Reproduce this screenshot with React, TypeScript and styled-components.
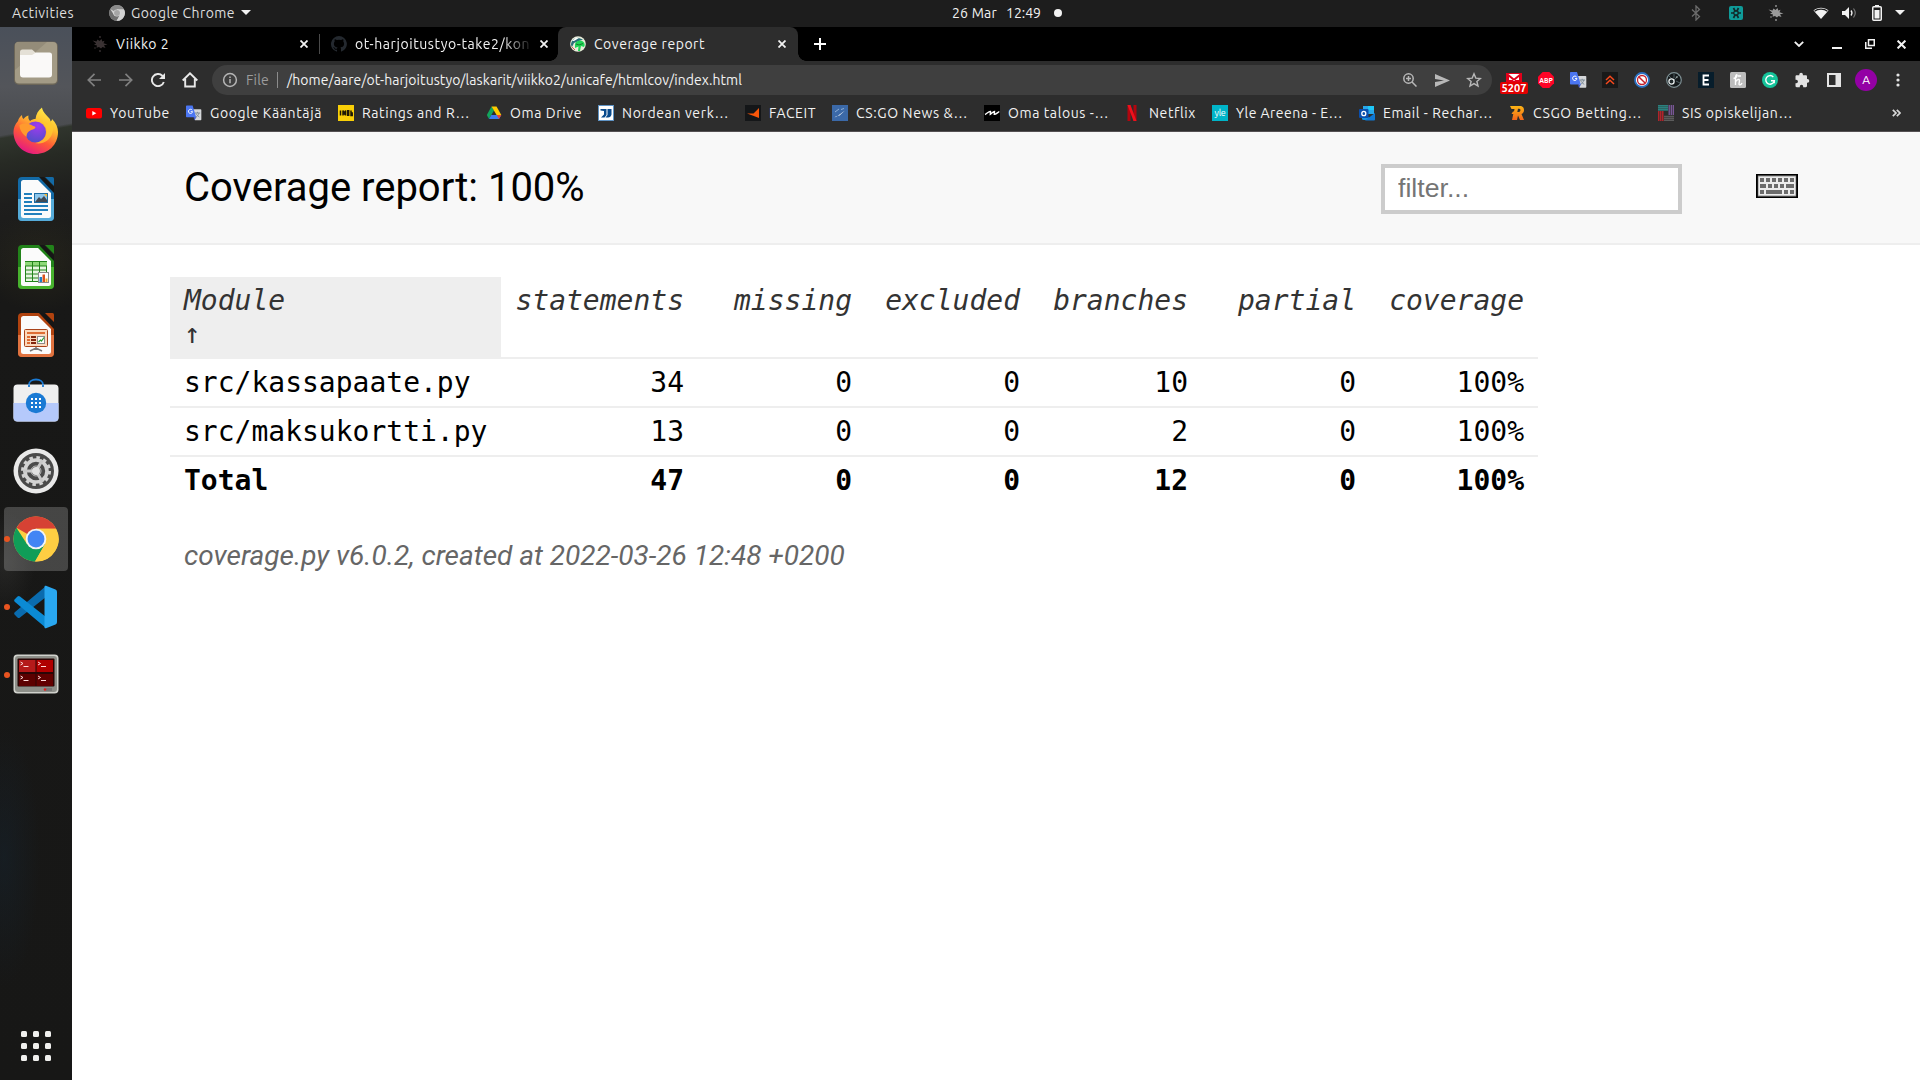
import React, { useLayoutEffect, useRef, useState } from "react";
import styled, { createGlobalStyle, css } from "styled-components";

const GlobalStyle = createGlobalStyle`
  html, body { margin: 0; padding: 0; }
  body { background: #fff; overflow: hidden; }
  * { box-sizing: border-box; }
`;

const uiFont = css`
  font-family: Ubuntu, "Noto Sans", "Open Sans", sans-serif;
  font-size: 14px;
  line-height: 20px;
`;

/* ---------- text fitted to a given advance width ---------- */

const Label = styled.span<{ $w: number; $color?: string; $size?: number; $weight?: number }>`
  display: block;
  flex: none;
  width: ${(p) => p.$w}px;
  white-space: pre;
  color: ${(p) => p.$color || "#f2f2f2"};
  font-size: ${(p) => p.$size || 14}px;
  font-weight: ${(p) => p.$weight || 400};
`;

type FitProps = { text: string; w: number; color?: string; size?: number; weight?: number };

function Fit({ text, w, color, size, weight }: FitProps) {
  const ref = useRef<HTMLSpanElement>(null);
  const [spacing, setSpacing] = useState(0);
  useLayoutEffect(() => {
    if (ref.current) {
      const natural = ref.current.getBoundingClientRect().width;
      setSpacing((w - natural) / text.length);
    }
  }, [text, w]);
  return (
    <Label $w={w} $color={color} $size={size} $weight={weight}>
      <span ref={ref} style={{ letterSpacing: `${spacing}px` }}>
        {text}
      </span>
    </Label>
  );
}

/* ---------- desktop shell ---------- */

const Screen = styled.div`
  ${uiFont}
  width: 1920px;
  height: 1080px;
  display: flex;
  flex-direction: column;
  overflow: hidden;
`;

const TopBar = styled.header`
  height: 27px;
  flex: none;
  display: grid;
  grid-template-columns: 952px 1fr auto;
  align-items: center;
  padding-bottom: 2px;
  background: #1d1d1d;
`;

const TopLeft = styled.div`
  display: flex;
  align-items: center;
  padding-left: 12px;
`;

const AppMenu = styled.div`
  display: flex;
  align-items: center;
  gap: 6px;
  margin-left: 35px;
`;

const Clock = styled.div`
  display: flex;
  align-items: center;
  gap: 9px;
`;

const NotifyDot = styled.i`
  width: 8px;
  height: 8px;
  margin-left: 4px;
  border-radius: 50%;
  background: #f2f2f2;
`;

const Tray = styled.div`
  display: flex;
  align-items: center;
  padding-right: 15px;
`;

const TrayCell = styled.span<{ $w: number }>`
  width: ${(p) => p.$w}px;
  display: flex;
  justify-content: center;
`;

const Caret = styled.i`
  border: 5px solid transparent;
  border-top-color: #f2f2f2;
  border-bottom: 0;
`;

const Body = styled.div`
  flex: 1;
  display: flex;
  min-height: 0;
`;

const Dock = styled.nav`
  width: 72px;
  flex: none;
  display: flex;
  flex-direction: column;
  align-items: center;
  gap: 4px;
  padding: 4px 0 2px;
  background:
    radial-gradient(ellipse 36px 130px at 4px 830px, rgba(22, 34, 44, 0.55), transparent),
    radial-gradient(ellipse 60px 50px at 40px 235px, rgba(50, 48, 28, 0.45), transparent),
    radial-gradient(ellipse 30px 50px at 5px 535px, rgba(60, 60, 58, 0.4), transparent),
    linear-gradient(170deg, transparent 107px, #30352d 110px, #272a24 135px, #1e1e1d 175px, #181817 260px, #171716 100%),
    linear-gradient(#4a505a, #53555a 60px, #484a4d 110px);
`;

const DockItem = styled.div<{ $active?: boolean }>`
  position: relative;
  width: 64px;
  height: 64px;
  flex: none;
  display: flex;
  align-items: center;
  justify-content: center;
  border-radius: 4px;
  background: ${(p) => (p.$active ? "rgba(255,255,255,0.2)" : "transparent")};
`;

const RunningDot = styled.i`
  position: absolute;
  left: 0;
  top: 29px;
  width: 6px;
  height: 6px;
  border-radius: 50%;
  background: #e95420;
`;

const AppsButton = styled.div`
  width: 30px;
  display: grid;
  grid-template-columns: repeat(3, 6px);
  gap: 6px;
  margin: auto 0 17px;
`;

const AppsDot = styled.i`
  height: 6px;
  border-radius: 1.5px;
  background: #f0f0ee;
`;

/* ---------- browser ---------- */

const Browser = styled.main`
  flex: 1;
  display: flex;
  flex-direction: column;
  min-width: 0;
  background: #fff;
`;

const TabStrip = styled.div`
  height: 34px;
  flex: none;
  display: flex;
  background: #000;
`;

const Tab = styled.div<{ $w: number; $inset: number; $active?: boolean }>`
  position: relative;
  width: ${(p) => p.$w}px;
  display: flex;
  align-items: center;
  gap: 8px;
  border-radius: 8px 8px 0 0;
  background: ${(p) => (p.$active ? "#2d2d2d" : "transparent")};
  padding: 0 8px 0 ${(p) => p.$inset}px;
  ${(p) =>
    p.$active &&
    css`
      &::before,
      &::after {
        content: "";
        position: absolute;
        bottom: 0;
        width: 8px;
        height: 8px;
      }
      &::before {
        left: -8px;
        background: radial-gradient(circle at 0 0, #000 7.5px, #2d2d2d 8px);
      }
      &::after {
        right: -8px;
        background: radial-gradient(circle at 100% 0, #000 7.5px, #2d2d2d 8px);
      }
    `}
`;

const TabTitle = styled.div<{ $fade?: boolean }>`
  flex: 1;
  min-width: 0;
  ${(p) =>
    p.$fade &&
    css`
      mask-image: linear-gradient(to right, #000 148px, transparent 178px);
    `}
`;

const TabDivider = styled.i`
  width: 1px;
  height: 20px;
  margin: 7px 0 0;
  background: #4a4a4a;
`;

const NewTab = styled.div`
  width: 44px;
  display: grid;
  place-items: center;
`;

const WindowControls = styled.div`
  margin-left: auto;
  display: flex;
  align-items: center;
`;

const Toolbar = styled.div`
  height: 38px;
  flex: none;
  display: flex;
  align-items: center;
  padding-left: 6px;
  background: #2d2d2d;
`;

const Cell = styled.div<{ $w?: number }>`
  position: relative;
  width: ${(p) => p.$w || 32}px;
  flex: none;
  display: flex;
  align-items: center;
  justify-content: center;
`;

const Omnibox = styled.div`
  width: 1280px;
  height: 30px;
  margin: 0 6px;
  padding: 0 2px 0 10px;
  flex: none;
  display: flex;
  align-items: center;
  border-radius: 15px;
  background: #3f3f3f;
`;

const OmniText = styled.div`
  flex: 1;
  display: flex;
  align-items: center;
  gap: 8px;
  margin-left: 8px;
`;

const OmniDivider = styled.i`
  width: 1px;
  height: 16px;
  background: #8c8c8c;
  margin-right: 1px;
`;

const MailBadge = styled.b`
  position: absolute;
  left: 2px;
  top: 10px;
  width: 28px;
  height: 12px;
  border-radius: 2px;
  background: #e30000;
  color: #fff;
  font-size: 11px;
  line-height: 12px;
  text-align: center;
`;

const Tile = styled.span<{ $bg: string; $fg?: string; $round?: string; $font?: number; $box?: number }>`
  width: ${(p) => p.$box || 16}px;
  height: ${(p) => p.$box || 16}px;
  flex: none;
  display: grid;
  place-items: center;
  border-radius: ${(p) => p.$round || "0"};
  background: ${(p) => p.$bg};
  color: ${(p) => p.$fg || "#fff"};
  font-size: ${(p) => p.$font || 10}px;
  line-height: 1;
  letter-spacing: -0.3px;
`;

const Bookmarks = styled.div`
  height: 32px;
  flex: none;
  display: flex;
  align-items: center;
  gap: 16px;
  padding: 0 19px 4px 14px;
  background: #2d2d2d;
`;

const Bookmark = styled.div`
  display: flex;
  align-items: center;
  gap: 8px;
`;

const Overflow = styled.div`
  margin-left: auto;
  display: flex;
`;

const BrowserEdge = styled.div`
  height: 1px;
  flex: none;
  background: #555153;
`;

/* ---------- coverage page ---------- */

const ReportHeader = styled.div`
  height: 113px;
  flex: none;
  display: flex;
  align-items: flex-start;
  padding: 32px 122px 0 112px;
  background: #f8f8f8;
  border-bottom: 2px solid #eee;
`;

const Title = styled.h1`
  flex: 1;
  margin: 0;
  font: 400 40px/47px Roboto, sans-serif;
  color: #000;
`;

const Filter = styled.input`
  width: 301px;
  height: 50px;
  padding: 0 13px 1px;
  border: 4px solid #ccc;
  border-radius: 0;
  background: #fff;
  font: 26.67px "Liberation Sans", Arial, sans-serif;
  &::placeholder {
    color: #757575;
    opacity: 1;
  }
`;

const KeyboardButton = styled.div`
  display: flex;
  margin: 10px 0 0 74px;
`;

const ReportBody = styled.section`
  padding: 32px 0 0 98px;
`;

const Table = styled.table`
  width: 1368px;
  table-layout: fixed;
  border-collapse: separate;
  border-spacing: 0;
  font: 28px/33px "DejaVu Sans Mono", monospace;
  color: #000;
`;

const Col = styled.col<{ $w: number }>`
  width: ${(p) => p.$w}px;
`;

const Th = styled.th<{ $sorted?: boolean }>`
  padding: 7px 14px;
  vertical-align: top;
  white-space: nowrap;
  font-weight: 400;
  font-style: italic;
  color: #333;
  text-align: ${(p) => (p.$sorted ? "left" : "right")};
  background: ${(p) => (p.$sorted ? "#eee" : "transparent")};
  border-bottom: 2px solid #eee;
`;

const SortArrow = styled.span`
  display: block;
  font-style: normal;
`;

const Td = styled.td<{ $total?: boolean }>`
  padding: 7px 14px;
  white-space: nowrap;
  text-align: right;
  font-weight: ${(p) => (p.$total ? 700 : 400)};
  border-bottom: ${(p) => (p.$total ? "0" : "2px solid #eee")};
  &:first-child {
    text-align: left;
  }
`;

const Footer = styled.p`
  margin: 35px 0 0 14px;
  font: italic 400 28px/33px Roboto, sans-serif;
  color: #666;
`;

/* ---------- drawings ---------- */

const Close = ({ s = 8, w = 1.8 }: { s?: number; w?: number }) => (
  <svg width={s} height={s} viewBox="0 0 8 8" stroke="#f2f2f2" strokeWidth={w} fill="none">
    <path d="M.5.5l7 7M7.5.5l-7 7" />
  </svg>
);

const Bird = ({ color }: { color: string }) => (
  <svg width="16" height="16" viewBox="0 0 16 16" fill={color}>
    <path d="M.5 4.500l4 1L5.500 3.500l2 1.500L9.500 3l.8 2.500 2.200-.8-1 2.500L15.500 8.500l-3.500.8 1.500 2.700-3-1L9 12.500l-2-1.500-2.500.8.5-2.300-3-.7 2.200-1.300z" />
    <circle cx="8" cy="1" r=".9" />
    <circle cx="8" cy="15" r=".9" />
    <circle cx="3" cy="12" r=".8" />
  </svg>
);

const ChromeLogo = ({ size, mono }: { size: number; mono?: boolean }) => {
  const c = mono ? ["#8a8a8a", "#d2d2d2", "#6e6e6e", "#a5a5a5"] : ["#d64234", "#fece43", "#109d58", "#4285f4"];
  return (
    <svg width={size} height={size} viewBox="0 0 48 48">
      <circle cx="24" cy="24" r="23.500" fill={c[1]} />
      <path d="M24 24L3.600 12.300A23.500 23.500 0 0 1 45 13.200H24z" fill={c[0]} />
      <path d="M3.600 12.300A23.500 23.500 0 0 0 23 47.500L33.300 29.500 24 24l-9.300 5.500z" fill={c[2]} />
      <path d="M24 13.200h21A23.500 23.500 0 0 1 23 47.500l10.400-18z" fill={c[1]} />
      <circle cx="24" cy="24" r="10.800" fill={mono ? "#d8d8d8" : "#f4f4f4"} />
      <circle cx="24" cy="24" r="8.800" fill={c[3]} />
    </svg>
  );
};

const Translate = () => (
  <svg width="17" height="16" viewBox="0 0 17 16">
    <path d="M7 4h8.500a.8.8 0 0 1 .8.8V15a.8.8 0 0 1-.8.8H9.500z" fill="#d5d7da" />
    <path d="M9.500 8h5.500M12.200 6.800V8M13.800 8c-.5 2-1.700 3.500-3.300 4.500M10.700 8.500c.6 1.500 2 3 3.500 3.800" stroke="#7c8a96" fill="none" />
    <path d="M.8 0H7l3.800 12.500H.8A.8.8 0 0 1 0 11.700V.8A.8.8 0 0 1 .8 0z" fill="#4b76f2" />
    <path d="M8 12.500h3L9 15.800z" fill="#3a55c8" />
    <path d="M6.600 5A2.200 2.200 0 1 0 7 6.600H5" stroke="#fff" strokeWidth="1" fill="none" />
  </svg>
);

const CoverageFavicon = () => (
  <svg width="16" height="16" viewBox="0 0 16 16">
    <circle cx="8" cy="8" r="7.800" fill="#e8ecd9" />
    <path d="M1 9C1 5 4 2 8 1.800l5 1.700L9 5 4 7 2 11z" fill="#2c6f78" />
    <path d="M2 5l4-3.500 3 .5-5 3z" fill="#fff" />
    <path d="M5 8c1-3 5-4.500 8-2.500 2 1.500 2 4 1 5.500l-3-1-1 5H8l.5-4.500L5 12z" fill="#1fd655" />
    <path d="M6 8l3 1 4-1.500" stroke="#167a2e" fill="none" />
    <path d="M1.500 10.500L5 14" stroke="#c33" strokeWidth=".8" />
  </svg>
);

const GitHub = () => (
  <svg width="16" height="16" viewBox="0 0 16 16" fill="#24292f">
    <path d="M8 0a8 8 0 0 0-2.530 15.590c.4.070.55-.17.55-.38v-1.490C3.780 14.200 3.310 12.740 3.310 12.740c-.36-.92-.89-1.170-.89-1.170-.73-.5.050-.49.050-.49.8.060 1.230.83 1.230.83.71 1.220 1.870.87 2.330.66.070-.52.280-.87.500-1.070-1.780-.2-3.640-.89-3.640-3.950 0-.87.310-1.590.82-2.150-.08-.2-.36-1.020.08-2.120 0 0 .67-.21 2.200.82a7.600 7.600 0 0 1 4 0c1.530-1.040 2.200-.82 2.200-.82.44 1.100.16 1.920.08 2.120.51.56.82 1.270.82 2.150 0 3.070-1.870 3.750-3.650 3.950.29.250.54.730.54 1.480v2.190c0 .21.150.46.550.38A8 8 0 0 0 8 0z" />
  </svg>
);

const FilesIcon = () => (
  <svg width="46" height="46" viewBox="0 0 46 46">
    <rect x="1" y="1.500" width="44" height="43.500" rx="5" fill="#6c6658" />
    <rect x="2" y="2" width="42" height="41.500" rx="4" fill="#a39b86" />
    <path d="M2 30L34 2H6a4 4 0 0 0-4 4z" fill="#948c79" />
    <path d="M7 12a2.500 2.500 0 0 1 2.500-2.500H19l4 3.500v6H7z" fill="#e4e0d6" />
    <path d="M7 15h12l4-2.500h13.500A2.500 2.500 0 0 1 39 15v19.500a3 3 0 0 1-3 3H10a3 3 0 0 1-3-3z" fill="#faf9f8" />
  </svg>
);

const FirefoxIcon = () => (
  <svg width="46" height="48" viewBox="0 0 46 48">
    <defs>
      <linearGradient id="ffBody" x1=".8" y1="0" x2=".3" y2="1">
        <stop offset="0" stopColor="#fff44f" />
        <stop offset=".35" stopColor="#ffbd2e" />
        <stop offset=".65" stopColor="#ff5a36" />
        <stop offset="1" stopColor="#e31587" />
      </linearGradient>
      <radialGradient id="ffGlobe" cx=".6" cy=".2" r=".9">
        <stop offset="0" stopColor="#a03bf0" />
        <stop offset="1" stopColor="#4a4fc4" />
      </radialGradient>
    </defs>
    <path d="M5 14c.5-2.500 2-4.500 4-6 0 2 .5 3 1.500 4 1.500-2 3-3 5-3.500-.5 2 0 4 1.500 5.500 2-1.500 3.500-2 5.500-2 .5-5 3-9 6.500-11.500.5 4 4 7 7 10.500 1 1 1.500 2.500 1.500 3.500 1-.5 1.500-1.500 1.500-2.500 4 4 6 8.500 6 13 0 13-10 22-22.500 22S.5 37 .5 25c0-4 1.500-8 4.500-11z" fill="url(#ffBody)" />
    <circle cx="22.500" cy="25" r="10.500" fill="url(#ffGlobe)" />
    <path d="M6.500 18c5-2.500 9-1.500 12 0 1.500 1 4 1.500 4 2.500-1 2-4 2-6 3.500-2 1-3 3-3 6-4-3-7-7-7-12z" fill="#ff9a2e" />
    <path d="M24 12.500c6 1 9.500 6 9.500 11.500 0 6-4.500 11-11.500 12 9 2 17-4 18-13 .5-5-2-8-5-10.500 0 2 0 4-.5 6-2.500-4-6-6.500-10.500-6z" fill="#ffcb2f" opacity=".75" />
  </svg>
);

type OfficeKind = "writer" | "calc" | "impress";

const OfficeIcon = ({ kind }: { kind: OfficeKind }) => {
  const dark = { writer: "#136aa6", calc: "#22831a", impress: "#b1430f" }[kind];
  const light = { writer: "#55abd9", calc: "#48b32e", impress: "#e07340" }[kind];
  return (
    <svg width="38" height="46" viewBox="0 0 38 46">
      <path d="M5 1h19l13 13v27a4 4 0 0 1-4 4H5a4 4 0 0 1-4-4V5a4 4 0 0 1 4-4z" fill={dark} />
      <path d="M1 23h36v18a4 4 0 0 1-4 4H5a4 4 0 0 1-4-4z" fill={light} />
      <path d="M6.500 4H21l13 13v22.500a2.500 2.500 0 0 1-2.500 2.500h-25A2.500 2.500 0 0 1 4 39.500v-33A2.500 2.500 0 0 1 6.500 4z" fill="#fbfbfb" />
      <path d="M22 1l5 0 10 10v6z" fill="#161616" />
      <path d="M28 1h7.500A1.500 1.500 0 0 1 37 2.500V10z" fill={dark} />
      {kind === "writer" && (
        <g>
          <path d="M7 18h8M7 22h8M7 26h8M7 30h24M7 34h24M7 38h18" stroke="#2180bd" strokeWidth="2" />
          <rect x="17.500" y="17.500" width="13" height="9" fill="#8cc6ec" stroke="#1c6ca3" />
          <path d="M18 26l4-5 2 2 3-3 3 4v2z" fill="#414b55" />
          <path d="M27 18h3v3z" fill="#f5b52e" />
        </g>
      )}
      {kind === "calc" && (
        <g>
          <rect x="8.500" y="17.500" width="21" height="20" fill="#e6f6df" stroke="#22831a" />
          <path d="M8 18h22v4H8z" fill="#8ed878" />
          <path d="M8 22h22M8 26h22M8 30h22M8 34h22M15.500 17v21M22.500 17v21" stroke="#22831a" />
          <rect x="21.500" y="28.500" width="10" height="10" fill="#fff" stroke="#8a8a8a" />
          <path d="M22.500 33h2.500v5h-2.500z" fill="#1c80c8" />
          <path d="M25.500 30.500h2.500v7.500h-2.500z" fill="#d9521c" />
          <path d="M28.500 34.500h2v3.500h-2z" fill="#f0ab26" />
        </g>
      )}
      {kind === "impress" && (
        <g>
          <path d="M19 35v3M13 39l6-3 6 3" stroke="#777" strokeWidth="1.500" fill="none" />
          <rect x="7.500" y="17.500" width="23" height="17" rx="1" fill="#fbd9bd" stroke="#a9431a" />
          <path d="M10 21h18" stroke="#df6d34" strokeWidth="2" />
          <path d="M10 25h3M10 28h3M10 31h3" stroke="#df6d34" strokeWidth="2" />
          <path d="M14 25h5M14 28h5M14 31h5" stroke="#83260c" strokeWidth="2" />
          <rect x="20.500" y="24.500" width="7" height="7" fill="#fff" stroke="#8a8a8a" />
          <path d="M21.500 30l2-2 1 1 2.500-3.500" stroke="#2c9b2c" strokeWidth="1.200" fill="none" />
        </g>
      )}
    </svg>
  );
};

const SoftwareIcon = () => (
  <svg width="46" height="50" viewBox="0 0 46 50">
    <path d="M16 9V6.500c0-3 3-5 7-5s7 2 7 5V9" fill="none" stroke="#1a7ad4" strokeWidth="1.800" />
    <rect x=".5" y="6.500" width="45" height="37" rx="4" fill="#efefef" />
    <path d="M.5 25h45v14.500a4 4 0 0 1-4 4h-37a4 4 0 0 1-4-4z" fill="#b5c9fb" />
    <path d="M16 9V6.500M30 9V6.500" stroke="#1a7ad4" strokeWidth="1.800" />
    <circle cx="23" cy="25" r="10.200" fill="#1a7ad4" />
    {[21, 25, 29].map((y) => [19, 23, 27].map((x) => <rect key={`${x}-${y}`} x={x - 1} y={y - 1} width="2" height="2" fill="#fff" />))}
  </svg>
);

const SettingsIcon = () => (
  <svg width="46" height="46" viewBox="0 0 46 46">
    <circle cx="23" cy="23" r="22.500" fill="#e9e9e9" />
    <circle cx="23" cy="23" r="18" fill="#4a4a4a" />
    <circle cx="23" cy="23" r="13.500" fill="none" stroke="#d2d2d2" strokeWidth="3" strokeDasharray="3.500 3.568" />
    <circle cx="23" cy="23" r="11" fill="none" stroke="#d2d2d2" strokeWidth="3.600" />
    <circle cx="23" cy="23" r="5" fill="none" stroke="#bdbdbd" strokeWidth="1" />
    <path d="M23 23H10M23 23l6.500-11M23 23l6.500 11" stroke="#c8c8c8" strokeWidth="3" />
    <circle cx="23" cy="23" r="4" fill="#e0e0e0" />
  </svg>
);

const CodeIcon = () => (
  <svg width="44" height="44" viewBox="0 0 44 44">
    <path d="M32 1v11L6 32.500a2 2 0 0 1-2.500 0L1 30a2 2 0 0 1 0-3z" fill="#0a6bae" />
    <path d="M32 43V32L6 11.500a2 2 0 0 0-2.500 0L1 14a2 2 0 0 0 0 3z" fill="#0b8ad4" />
    <path d="M32 .8l9.500 3.700A2.500 2.500 0 0 1 43 7v30a2.500 2.500 0 0 1-1.500 2.500L32 43.200c-1 .3-1.500-.2-1.500-1.200V2c0-1 .5-1.500 1.500-1.200z" fill="#29a7f0" />
  </svg>
);

const TerminatorIcon = () => (
  <svg width="46" height="44" viewBox="0 0 46 44">
    <rect x=".5" y="1.500" width="45" height="39" rx="4" fill="#d0d1cc" />
    <rect x="2" y="3" width="42" height="36" rx="3" fill="#8d8f89" />
    <rect x="4.500" y="5.500" width="37" height="28" rx="1" fill="#2a0606" />
    {[
      [6, 7, "#b51a1a"],
      [23.500, 7, "#b00000"],
      [6, 21, "#5c0000"],
      [23.500, 21, "#620000"],
    ].map(([x, y, f]) => (
      <g key={`${x}-${y}`} transform={`translate(${x} ${y})`}>
        <rect width="16.500" height="12" fill={f as string} />
        <path d="M1.500 2l2.500 1.500L1.500 5M4.500 6.500h5" stroke="#ffd9d9" fill="none" />
      </g>
    ))}
    <path d="M33 35h6v3h-6z" fill="#777" />
    <circle cx="32" cy="36.500" r="1.300" fill="#e02020" />
  </svg>
);

const Keyboard = () => (
  <svg width="42" height="24" viewBox="0 0 42 24">
    <rect width="42" height="24" fill="#000" />
    <rect x="1.800" y="1.500" width="38.400" height="21" fill="#909090" />
    <rect x="2.500" y="2.500" width="37" height="19" fill="#ececec" />
    <path
      d="M4 6h4M10 6h4M16 6h4M22 6h4M28 6h4M34 6h4M4 12h6M12 12h4M18 12h4M24 12h4M30 12h8M4 18h4M10 18h16M28 18h4M34 18h4"
      stroke="#6c6c6c"
      strokeWidth="4"
    />
  </svg>
);

const ImdbIcon = () => (
  <svg width="16" height="16" viewBox="0 0 16 16">
    <path d="M0 0h16v16H0z" fill="#f9cf07" />
    <path d="M2.500 5.500v5M5 10.500v-5l1.300 3 1.300-3v5M9.700 5.800v4.400h1V5.800zM13 5.500v5h1.200V8H13" stroke="#1b1705" strokeWidth="1.500" fill="none" />
  </svg>
);

/* ---------- data ---------- */

const bookmarks: { icon: React.ReactNode; text: string; w: number }[] = [
  {
    icon: (
      <svg width="16" height="16" viewBox="0 0 16 16">
        <rect y="3" width="16" height="10.500" rx="2.500" fill="#f00" />
        <path d="M6.300 6v4.500l4-2.250z" fill="#fff" />
      </svg>
    ),
    text: "YouTube",
    w: 60,
  },
  { icon: <Cell $w={16}><Translate /></Cell>, text: "Google Kääntäjä", w: 112 },
  { icon: <ImdbIcon />, text: "Ratings and R…", w: 108 },
  {
    icon: (
      <svg width="16" height="16" viewBox="0 0 16 16">
        <path d="M5.500 1.500L.8 10 3 14l5-8.500z" fill="#11a45c" />
        <path d="M5.500 1.500h5L15.300 10h-4.700z" fill="#fecb00" />
        <path d="M3 14l2.300-4h10L13 14z" fill="#3c7bf0" />
        <path d="M10.700 10h4.600L13 14z" fill="#ea4335" />
      </svg>
    ),
    text: "Oma Drive",
    w: 72,
  },
  {
    icon: (
      <svg width="16" height="16" viewBox="0 0 16 16">
        <path d="M0 0h16v16H0z" fill="#5f93c4" />
        <path d="M1 1h14v14H1z" fill="#fff" />
        <path d="M2.500 4H8.500v6L6.500 12.500H3L6 9.500V6L2.500 5.500zM9.500 4h4v5.500c-.5 2-1.500 3-3.500 3H7.500l2-2.500z" fill="#0a4b8c" />
      </svg>
    ),
    text: "Nordean verk…",
    w: 107,
  },
  {
    icon: (
      <svg width="16" height="16" viewBox="0 0 16 16">
        <path d="M0 0h16v16H0z" fill="#141618" />
        <path d="M14 3v10L9.500 11.200 2 8.500h6.500z" fill="#f95609" />
      </svg>
    ),
    text: "FACEIT",
    w: 47,
  },
  {
    icon: (
      <svg width="16" height="16" viewBox="0 0 16 16">
        <path d="M0 0h16v16H0z" fill="#3b69a8" />
        <path d="M2.500 12.500l3-1.500 7.500-5.500-5.500 5-3.500.8z" fill="#fff" />
        <path d="M3 7l4-3M9 4.500l3-1" stroke="#8fb0d6" />
      </svg>
    ),
    text: "CS:GO News &…",
    w: 112,
  },
  {
    icon: (
      <svg width="16" height="16" viewBox="0 0 16 16">
        <path d="M0 0h16v16H0z" />
        <path d="M1 9.500C3 8.500 5 6 6.500 6.500L6.300 9.300C8 8.500 9 6.500 10.500 6.500l-.2 2.800c1.500 0 3-1.500 5-2.800" stroke="#fff" strokeWidth="1.400" fill="none" />
      </svg>
    ),
    text: "Oma talous -…",
    w: 101,
  },
  {
    icon: (
      <svg width="16" height="16" viewBox="0 0 16 16">
        <path d="M2.500 0h3v16h-3zM8.500 0h3v16h-3z" fill="#b1060f" />
        <path d="M2.500 0h3l6 16h-3z" fill="#f0101c" />
      </svg>
    ),
    text: "Netflix",
    w: 47,
  },
  { icon: <Tile $bg="#00b4c8" $font={9}>yle</Tile>, text: "Yle Areena - E…", w: 107 },
  {
    icon: (
      <svg width="16" height="16" viewBox="0 0 16 16">
        <path d="M4 1h11v8H4z" fill="#28a8ea" />
        <path d="M9 1h6v4H9z" fill="#1fc8f8" />
        <path d="M3 9l12 6H4.500A1.500 1.500 0 0 1 3 13.500z" fill="#1490df" />
        <path d="M16 8v6.500a1 1 0 0 1-1 1H6z" fill="#0f78d4" />
        <rect y="4" width="9.500" height="9" rx="1" fill="#0a4fae" />
        <ellipse cx="4.800" cy="8.500" rx="2" ry="2.200" fill="none" stroke="#fff" strokeWidth="1.300" />
      </svg>
    ),
    text: "Email - Rechar…",
    w: 110,
  },
  {
    icon: (
      <svg width="16" height="16" viewBox="0 0 16 16">
        <defs>
          <linearGradient id="rg" x2="0" y2="1">
            <stop stopColor="#fdb515" />
            <stop offset="1" stopColor="#f4641b" />
          </linearGradient>
        </defs>
        <path
          fillRule="evenodd"
          d="M1 1h9.500C14 1 15 3 15 5s-1 3.500-2.500 4L15 15h-4L9 10.500 8 15H3l1.300-6H2.500L4 6.500h1L5.500 4H2.500zM9 3.800L8.300 7h1.500c2 0 2.300-3.200.4-3.200z"
          fill="url(#rg)"
        />
      </svg>
    ),
    text: "CSGO Betting…",
    w: 109,
  },
  {
    icon: (
      <svg width="16" height="16" viewBox="0 0 16 16" strokeWidth="1.300">
        <path d="M0 .8h10M0 2.800h10M0 4.800h10" stroke="#2b9d9a" />
        <path d="M11.200 0v10M13.300 0v10M15.300 0v10" stroke="#7d5a9c" />
        <path d="M.8 6v10M2.800 6v10M4.800 6v10" stroke="#c8242c" />
        <path d="M6 11.500h10M6 13.500h10M6 15.400h10" stroke="#5c5c5c" />
      </svg>
    ),
    text: "SIS opiskelijan…",
    w: 111,
  },
];

const extensions: React.ReactNode[] = [
  <>
    <svg width="16" height="16" viewBox="0 0 16 16">
      <rect y="1" width="16" height="13" fill="#e2001a" />
      <path d="M2.500 2h11L8 6.500zM3 5l5 4 5-4v3H3z" fill="#fff" />
    </svg>
    <MailBadge>5207</MailBadge>
  </>,
  <svg width="16" height="16" viewBox="0 0 16 16">
    <path d="M4.700 0h6.600L16 4.700v6.600L11.300 16H4.700L0 11.300V4.700z" fill="#ff0427" />
    <text x="8" y="10.600" fontSize="6.800" fontWeight="700" textAnchor="middle" fill="#fff">ABP</text>
  </svg>,
  <Translate />,
  <svg width="16" height="16" viewBox="0 0 16 16">
    <path d="M0 0h16v16H0z" fill="#191919" />
    <path d="M4 8l4-3.800L12 8M4 12l4-3.800 4 3.800" stroke="#f8481c" strokeWidth="1.500" fill="none" />
  </svg>,
  <svg width="16" height="16" viewBox="0 0 16 16">
    <circle cx="8" cy="8" r="7" fill="#fff" stroke="#2a6fc0" strokeWidth="1.800" />
    <circle cx="8" cy="8" r="4.500" fill="#fff" stroke="#c4202c" strokeWidth="1.300" />
    <path d="M4.700 4.700l6.600 6.600" stroke="#c4202c" strokeWidth="1.500" />
  </svg>,
  <svg width="16" height="16" viewBox="0 0 16 16">
    <circle cx="8" cy="8" r="7.300" fill="#15191b" stroke="#7e9094" strokeWidth="1.200" />
    <path d="M8 8l5-5M8 2v4M3 4l3 3M10 9l4 2" stroke="#4f5f63" />
    <circle cx="5.500" cy="9.500" r="2.600" fill="#20282a" stroke="#e8eeee" strokeWidth="1.300" />
    <circle cx="10.700" cy="5.300" r="1" fill="#8f9a9a" />
  </svg>,
  <svg width="16" height="16" viewBox="0 0 16 16">
    <path d="M0 0h16v16H0z" fill="#071d2b" />
    <path d="M11 3.500H5.500v9H11M5.500 8h5" stroke="#fff" strokeWidth="1.800" fill="none" />
  </svg>,
  <svg width="16" height="16" viewBox="0 0 16 16">
    <rect width="16" height="16" rx="1.500" fill="#bdbdbd" />
    <path d="M3.500 6.500C6 6 7.500 4 7 3S5.500 4 5.500 6v7M5.500 10c1-2.500 4-3.500 4-1.500L9 12c0 1.500 2 1 3-1M8 4h3" stroke="#fff" strokeWidth="1.400" fill="none" />
  </svg>,
  <svg width="16" height="16" viewBox="0 0 16 16">
    <circle cx="8" cy="8" r="8" fill="#15c39a" />
    <path d="M11.300 5A4.300 4.300 0 1 0 12.300 8.800H9M12.300 8.800l-.1 2.500" stroke="#fff" strokeWidth="1.400" fill="none" />
  </svg>,
  <svg width="16" height="16" viewBox="0 0 16 16" fill="#e2e2e2">
    <path d="M5.300 2.600a1.800 1.800 0 0 1 3.600 0v.6h2.900c.7 0 1.200.5 1.200 1.200v2.700h.5a1.800 1.800 0 0 1 0 3.600H13V14c0 .7-.5 1.200-1.200 1.200H9.200v-.7a1.700 1.700 0 0 0-3.400 0v.7H2.700c-.7 0-1.200-.5-1.200-1.200v-2.700h.7a1.700 1.700 0 0 0 0-3.500h-.7V4.400c0-.7.5-1.200 1.200-1.200h2.600z" />
  </svg>,
  <svg width="14" height="14" viewBox="0 0 14 14">
    <path d="M0 0h14v14H0z" fill="#e4e4e4" />
    <path d="M2 2h6.500v10H2z" fill="#2d2d2d" />
  </svg>,
  <Tile $bg="#9400a5" $box={22} $round="50%" $font={12}>A</Tile>,
  <svg width="4" height="14" viewBox="0 0 4 14" fill="#e4e4e4">
    <circle cx="2" cy="2" r="1.600" />
    <circle cx="2" cy="7" r="1.600" />
    <circle cx="2" cy="12" r="1.600" />
  </svg>,
];

const dockItems: { icon: React.ReactNode; active?: boolean; running?: boolean }[] = [
  { icon: <FilesIcon /> },
  { icon: <FirefoxIcon /> },
  { icon: <OfficeIcon kind="writer" /> },
  { icon: <OfficeIcon kind="calc" /> },
  { icon: <OfficeIcon kind="impress" /> },
  { icon: <SoftwareIcon /> },
  { icon: <SettingsIcon /> },
  { icon: <ChromeLogo size={46} />, active: true, running: true },
  { icon: <CodeIcon />, running: true },
  { icon: <TerminatorIcon />, running: true },
];

const columns = ["statements", "missing", "excluded", "branches", "partial", "coverage"];
const widths = [331, 197, 168, 168, 168, 168, 168];
const rows = [
  ["src/kassapaate.py", "34", "0", "0", "10", "0", "100%"],
  ["src/maksukortti.py", "13", "0", "0", "2", "0", "100%"],
];
const total = ["Total", "47", "0", "0", "12", "0", "100%"];

/* ---------- page ---------- */

export default function App() {
  return (
    <Screen>
      <GlobalStyle />
      <TopBar>
        <TopLeft>
          <Fit text="Activities" w={62} color="#dedede" />
          <AppMenu>
            <ChromeLogo size={16} mono />
            <Fit text="Google Chrome" w={104} color="#dedede" />
            <Caret />
          </AppMenu>
        </TopLeft>
        <Clock>
          <Fit text="26 Mar" w={45} />
          <Fit text="12:49" w={35} />
          <NotifyDot />
        </Clock>
        <Tray>
          <TrayCell $w={54}>
            <svg width="10" height="16" viewBox="0 0 10 16" fill="none" stroke="#6c6c6c" strokeWidth="1.300">
              <path d="M1 4.500l7.500 7L5 15V1l3.500 3.500L1 11.500" />
            </svg>
          </TrayCell>
          <TrayCell $w={26}>
            <svg width="14" height="14" viewBox="0 0 14 14">
              <rect width="14" height="14" rx="2" fill="#0f9b99" />
              <path d="M4.500 2l1.500 3h2l1.500-3M2 7h3.500M8.500 7H12M4.500 12L6 9h2l1.500 3" stroke="#12292b" strokeWidth="1.700" fill="none" />
              <circle cx="7" cy="7" r="2.300" fill="none" stroke="#12292b" strokeWidth="1.200" />
            </svg>
          </TrayCell>
          <TrayCell $w={54}>
            <Bird color="#9b9b9b" />
          </TrayCell>
          <TrayCell $w={36}>
            <svg width="16" height="12" viewBox="0 0 16 12">
              <path d="M.5 3.500C4.500-.2 11.500-.2 15.500 3.500L8 12z" fill="#f2f2f2" />
              <path d="M1.500 4.200C5 1.500 11 1.500 14.500 4.200" stroke="#1d1d1d" strokeWidth="1.300" fill="none" />
            </svg>
          </TrayCell>
          <TrayCell $w={20}>
            <svg width="15" height="12" viewBox="0 0 15 12">
              <path d="M0 4h3l4-4v12L3 8H0z" fill="#f2f2f2" />
              <path d="M9 3.500q2 2.500 0 5" stroke="#f2f2f2" strokeWidth="1.300" fill="none" />
              <path d="M11.500 1.500q3.500 4.500 0 9" stroke="#7a7a7a" strokeWidth="1.200" fill="none" />
            </svg>
          </TrayCell>
          <TrayCell $w={36}>
            <svg width="10" height="16" viewBox="0 0 10 16">
              <path d="M3 0h4v2H3z" fill="#f2f2f2" />
              <rect x=".75" y="1.750" width="8.500" height="13.500" rx="1" fill="none" stroke="#f2f2f2" strokeWidth="1.500" />
              <path d="M2.500 5h5v8.500h-5z" fill="#f2f2f2" />
            </svg>
          </TrayCell>
          <Caret />
        </Tray>
      </TopBar>
      <Body>
        <Dock>
          {dockItems.map((d, i) => (
            <DockItem key={i} $active={d.active}>
              {d.running && <RunningDot />}
              {d.icon}
            </DockItem>
          ))}
          <AppsButton>
            {Array.from({ length: 9 }, (_, i) => (
              <AppsDot key={i} />
            ))}
          </AppsButton>
        </Dock>
        <Browser>
          <TabStrip>
            <Tab $w={247} $inset={19}>
              <Cell $w={17}>
                <Bird color="#3a3233" />
              </Cell>
              <TabTitle>
                <Fit text="Viikko 2" w={53} />
              </TabTitle>
              <Cell $w={14}>
                <Close />
              </Cell>
            </Tab>
            <TabDivider />
            <Tab $w={238} $inset={11}>
              <GitHub />
              <TabTitle $fade>
                <Fit text="ot-harjoitustyo-take2/kon" w={175} />
              </TabTitle>
              <Cell $w={13}>
                <Close />
              </Cell>
            </Tab>
            <Tab $w={240} $inset={12} $active>
              <CoverageFavicon />
              <TabTitle>
                <Fit text="Coverage report" w={111} />
              </TabTitle>
              <Cell $w={16}>
                <Close />
              </Cell>
            </Tab>
            <NewTab>
              <svg width="12" height="12" viewBox="0 0 12 12" stroke="#fff" strokeWidth="2">
                <path d="M6 0v12M0 6h12" />
              </svg>
            </NewTab>
            <WindowControls>
              <Cell $w={38}>
                <svg width="10" height="6" viewBox="0 0 10 6" fill="none" stroke="#f2f2f2" strokeWidth="1.800">
                  <path d="M.8.8L5 5 9.200.8" />
                </svg>
              </Cell>
              <Cell $w={38}>
                <svg width="10" height="10" viewBox="0 0 10 10">
                  <path d="M0 8h10v2H0z" fill="#f2f2f2" />
                </svg>
              </Cell>
              <Cell $w={27}>
                <svg width="10" height="10" viewBox="0 0 10 10" fill="none" stroke="#f2f2f2" strokeWidth="1.500">
                  <path d="M3.500.75h5.750v5.750H3.500zM.75 3v6.250H7" />
                </svg>
              </Cell>
              <Cell $w={37}>
                <Close s={9} />
              </Cell>
            </WindowControls>
          </TabStrip>
          <Toolbar>
            <Cell>
              <svg width="14" height="14" viewBox="0 0 14 14" fill="none" stroke="#808080" strokeWidth="1.700">
                <path d="M14 7H1.500M7.500.8L1.300 7l6.200 6.200" />
              </svg>
            </Cell>
            <Cell>
              <svg width="14" height="14" viewBox="0 0 14 14" fill="none" stroke="#808080" strokeWidth="1.700">
                <path d="M0 7h12.500M6.500.8L12.700 7l-6.200 6.200" />
              </svg>
            </Cell>
            <Cell>
              <svg width="14" height="14" viewBox="0 0 14 14">
                <path d="M12.800 9A6.100 6.100 0 1 1 11.300 2.700L13 4.500" fill="none" stroke="#e8e8e8" strokeWidth="1.900" />
                <path d="M14 0v6H8z" fill="#e8e8e8" />
              </svg>
            </Cell>
            <Cell>
              <svg width="16" height="16" viewBox="0 0 16 16" fill="none" stroke="#e8e8e8" strokeWidth="1.900">
                <path d="M.7 8.500L8 1.300l7.300 7.200M3.200 7v7.500h9.600V7" />
              </svg>
            </Cell>
            <Omnibox>
              <svg width="16" height="16" viewBox="0 0 16 16" fill="none" stroke="#b5b5b5" strokeWidth="1.500">
                <circle cx="8" cy="8" r="6.400" />
                <path d="M8 7v4.300M8 4.500v1.600" />
              </svg>
              <OmniText>
                <Fit text="File" w={23} color="#9c9c9c" />
                <OmniDivider />
                <Fit text="/home/aare/ot-harjoitustyo/laskarit/viikko2/unicafe/htmlcov/index.html" w={455} />
              </OmniText>
              <Cell>
                <svg width="14" height="14" viewBox="0 0 14 14" fill="none" stroke="#b8b8b8" strokeWidth="1.500">
                  <circle cx="5.500" cy="5.500" r="4.700" />
                  <path d="M9 9l4.500 4.500M3 5.500h5M5.500 3v5" />
                </svg>
              </Cell>
              <Cell>
                <svg width="15" height="13" viewBox="0 0 15 13" fill="#b8b8b8">
                  <path d="M0 0l15 6.500L0 13V8l9-1.500L0 5z" />
                </svg>
              </Cell>
              <Cell>
                <svg width="16" height="16" viewBox="0 0 16 16" fill="none" stroke="#b8b8b8" strokeWidth="1.400">
                  <path d="M8 1.800l1.800 4.300 4.600.4-3.500 3 1.100 4.600L8 11.600l-4 2.500 1.100-4.600-3.500-3 4.600-.4z" />
                </svg>
              </Cell>
            </Omnibox>
            {extensions.map((e, i) => (
              <Cell key={i}>{e}</Cell>
            ))}
          </Toolbar>
          <Bookmarks>
            {bookmarks.map((b) => (
              <Bookmark key={b.text}>
                {b.icon}
                <Fit text={b.text} w={b.w} />
              </Bookmark>
            ))}
            <Overflow>
              <svg width="9" height="8" viewBox="0 0 9 8" fill="none" stroke="#d8d8d8" strokeWidth="1.700">
                <path d="M.8.8L4 4 .8 7.200M4.800.8L8 4 4.800 7.200" />
              </svg>
            </Overflow>
          </Bookmarks>
          <BrowserEdge />
          <ReportHeader>
            <Title>Coverage report: 100%</Title>
            <Filter placeholder="filter..." />
            <KeyboardButton>
              <Keyboard />
            </KeyboardButton>
          </ReportHeader>
          <ReportBody>
            <Table>
              <colgroup>
                {widths.map((w, i) => (
                  <Col key={i} $w={w} />
                ))}
              </colgroup>
              <thead>
                <tr>
                  <Th $sorted>
                    Module<SortArrow>↑</SortArrow>
                  </Th>
                  {columns.map((c) => (
                    <Th key={c}>{c}</Th>
                  ))}
                </tr>
              </thead>
              <tbody>
                {rows.map((r) => (
                  <tr key={r[0]}>
                    {r.map((v, i) => (
                      <Td key={i}>{v}</Td>
                    ))}
                  </tr>
                ))}
              </tbody>
              <tfoot>
                <tr>
                  {total.map((v, i) => (
                    <Td key={i} $total>
                      {v}
                    </Td>
                  ))}
                </tr>
              </tfoot>
            </Table>
            <Footer>coverage.py v6.0.2, created at 2022-03-26 12:48 +0200</Footer>
          </ReportBody>
        </Browser>
      </Body>
    </Screen>
  );
}
